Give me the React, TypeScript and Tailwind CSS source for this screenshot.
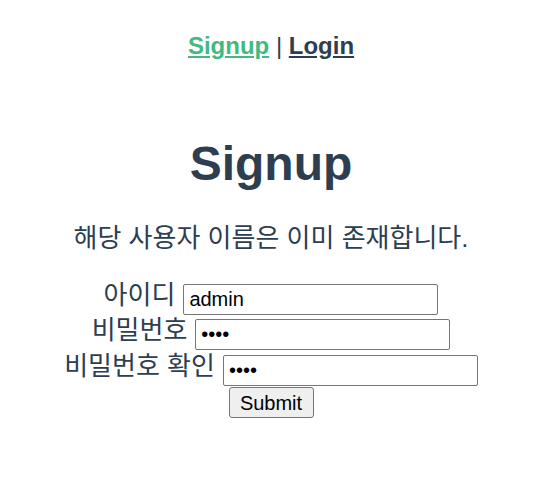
export default function App() {
  return (
    <div className="min-h-[500px] bg-white pr-[7px] text-center text-[#2c3e50] font-['Liberation_Sans','Noto_Sans_CJK_KR',sans-serif]">
      {/* Nav */}
      <nav className="pt-[32px] text-[24px] leading-[28px]">
        <a href="#" className="font-bold text-[#42b983] underline">Signup</a>
        <span> | </span>
        <a href="#" className="font-bold text-[#2c3e50] underline">Login</a>
      </nav>

      {/* Heading */}
      <h1 className="mt-[76px] text-[48px] leading-[56px] font-bold">Signup</h1>

      <p className="mt-[30px] text-[26px] leading-[32px]">해당 사용자 이름은 이미 존재합니다.</p>

      <form className="mt-[30px] flex flex-col items-center" onSubmit={(e) => e.preventDefault()}>
        <div className="flex h-[31px] items-center">
          <label className="mb-[10px] text-[26px] leading-[26px]">아이디</label>
          <input
            type="text"
            defaultValue="admin"
            className="ml-[8px] h-[31px] w-[255px] rounded-[2px] border border-[#767676] px-[5px] text-[20px] text-black font-['Liberation_Sans',sans-serif] outline-none"
          />
        </div>
        <div className="mt-[4px] flex h-[31px] items-center">
          <label className="mb-[10px] text-[26px] leading-[26px]">비밀번호</label>
          <input
            type="password"
            defaultValue="1234"
            className="ml-[8px] h-[31px] w-[255px] rounded-[2px] border border-[#767676] px-[5px] text-[20px] text-black font-['Liberation_Sans',sans-serif] outline-none"
          />
        </div>
        <div className="mt-[5px] flex h-[31px] items-center">
          <label className="mb-[10px] text-[26px] leading-[26px]">비밀번호 확인</label>
          <input
            type="password"
            defaultValue="1234"
            className="ml-[8px] h-[31px] w-[255px] rounded-[2px] border border-[#767676] px-[5px] text-[20px] text-black font-['Liberation_Sans',sans-serif] outline-none"
          />
        </div>
        <button
          type="submit"
          className="mt-[1px] h-[31px] w-[85px] rounded-[3px] border border-[#767676] bg-[#efefef] text-[20px] leading-[24px] text-black font-['Liberation_Sans',sans-serif]"
        >
          Submit
        </button>
      </form>
    </div>
  );
}
